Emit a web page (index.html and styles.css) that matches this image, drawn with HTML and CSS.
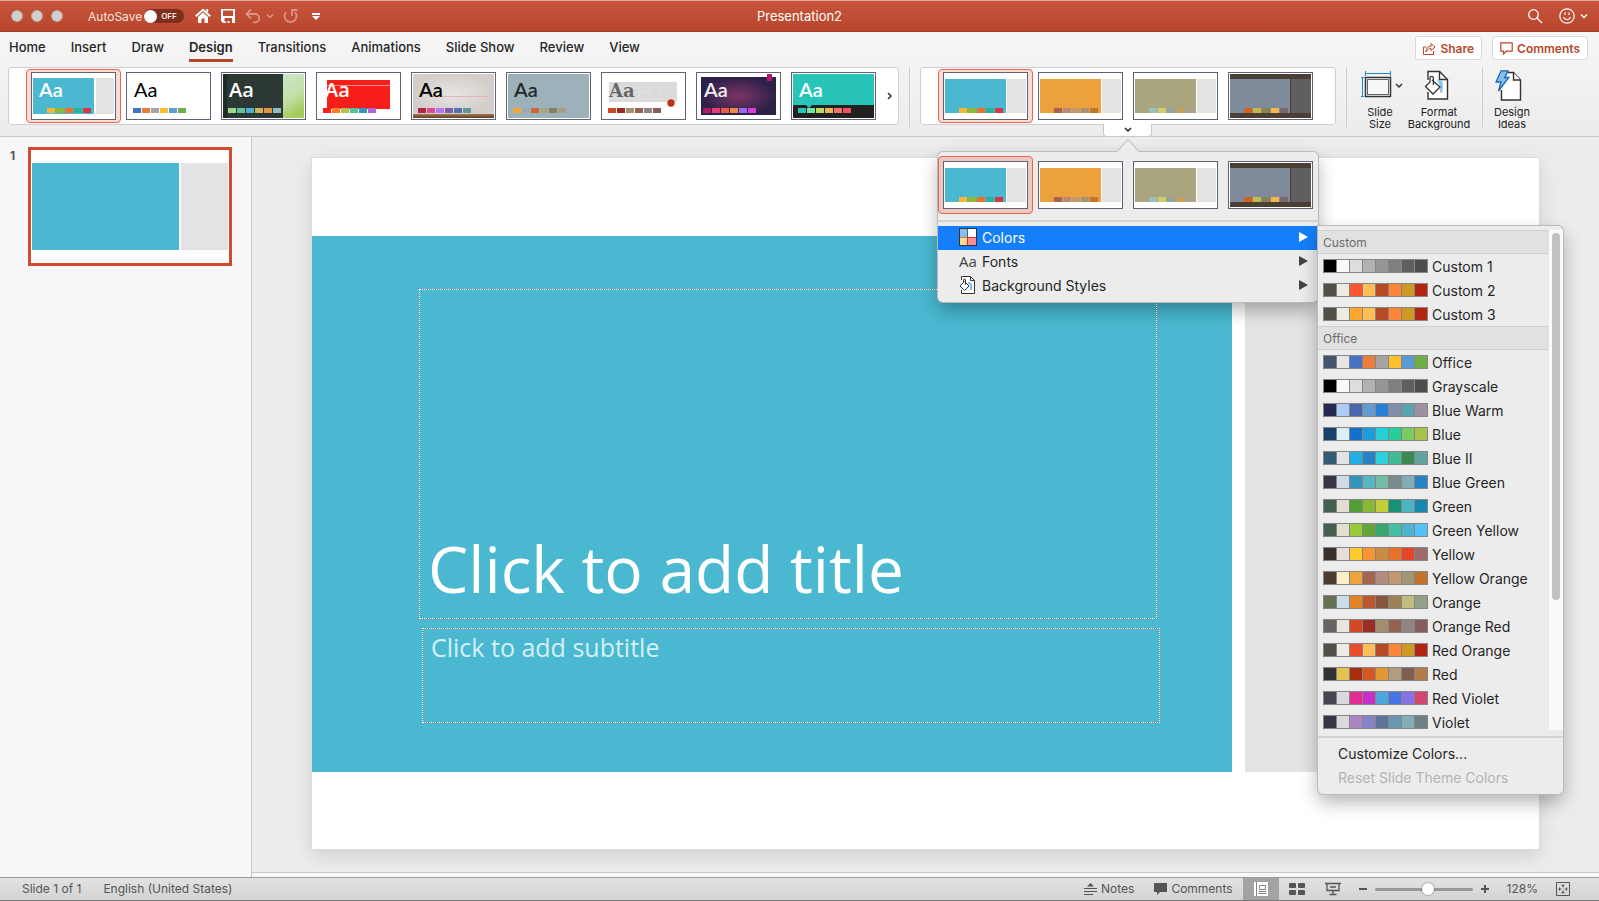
FILE: index.html
```
<!DOCTYPE html>
<html lang="en">
<head>
<meta charset="utf-8">
<title>Presentation2</title>
<link rel="stylesheet" href="styles.css">
</head>
<body>
<svg class="defs" aria-hidden="true">
  <defs>
    <radialGradient id="g-purple"><stop offset="0" stop-color="#7d3566"/><stop offset="1" stop-color="#2c2148"/></radialGradient>
    <radialGradient id="g-stone"><stop offset="0" stop-color="#e8e5e2"/><stop offset="1" stop-color="#d3cec9"/></radialGradient>
    <linearGradient id="g-leaf" x1="0" y1="0" x2="0.3" y2="1"><stop offset="0" stop-color="#c9e6c9"/><stop offset="0.6" stop-color="#c3e0a8"/><stop offset="1" stop-color="#a3cb5c"/></linearGradient>
    <linearGradient id="g-wood" x1="0" y1="0" x2="0" y2="1"><stop offset="0" stop-color="#a27a50"/><stop offset="1" stop-color="#5e3f22"/></linearGradient>
  </defs>
  <symbol id="v-teal" viewBox="0 0 85 48">
    <rect x=".5" y=".5" width="84" height="47" fill="#fff" stroke="#5f6473"/>
    <path fill="#49b8d0" d="M2 7h61v34H2z"/><path fill="#e3e3e3" d="M64 7h19v34H64z"/>
    <path fill="#fbb829" d="M16 36h8v5h-8z"/><path fill="#8fb934" d="M25 36h8v5h-8z"/><path fill="#f07024" d="M34 36h8v5h-8z"/><path fill="#29b19b" d="M43 36h8v5h-8z"/><path fill="#d6373f" d="M52 36h8v5h-8z"/>
  </symbol>
  <symbol id="v-orange" viewBox="0 0 85 48">
    <rect x=".5" y=".5" width="84" height="47" fill="#fff" stroke="#5f6473"/>
    <path fill="#eca13c" d="M2 7h61v34H2z"/><path fill="#e3e3e3" d="M64 7h19v34H64z"/>
    <path fill="#a5644e" d="M16 36h8v5h-8z"/><path fill="#b58b80" d="M25 36h8v5h-8z"/><path fill="#c3986d" d="M34 36h8v5h-8z"/><path fill="#a19574" d="M43 36h8v5h-8z"/><path fill="#c17529" d="M52 36h8v5h-8z"/>
  </symbol>
  <symbol id="v-olive" viewBox="0 0 85 48">
    <rect x=".5" y=".5" width="84" height="47" fill="#fff" stroke="#5f6473"/>
    <path fill="#a9a57f" d="M2 7h61v34H2z"/><path fill="#e3e3e3" d="M64 7h19v34H64z"/>
    <path fill="#9cbebd" d="M16 36h8v5h-8z"/><path fill="#d2cb6c" d="M25 36h8v5h-8z"/><path fill="#95a39d" d="M34 36h8v5h-8z"/><path fill="#c89f5d" d="M43 36h8v5h-8z"/><path fill="#b1a089" d="M52 36h8v5h-8z"/>
  </symbol>
  <symbol id="v-slate" viewBox="0 0 85 48">
    <rect x=".5" y=".5" width="84" height="47" fill="#fff" stroke="#5f6473"/>
    <path fill="#4b3e35" d="M2 2h81v44H2z"/><path fill="#7f8a9b" d="M2 7h60v34H2z"/><path fill="#605e61" d="M63 7h20v34H63z"/>
    <path fill="#7c8ba0" d="M7 36h8v5H7z"/><path fill="#d2631a" d="M16 36h8v5h-8z"/><path fill="#c5b947" d="M25 36h8v5h-8z"/><path fill="#8b8354" d="M34 36h8v5h-8z"/><path fill="#f8b74d" d="M43 36h8v5h-8z"/><path fill="#79696f" d="M52 36h8v5h-8z"/>
  </symbol>
</svg>

<header class="titlebar">
  <div class="titlebar-side">
    <div class="lights"><button aria-label="Close"></button><button aria-label="Minimize"></button><button aria-label="Zoom"></button></div>
    <label class="autosave">AutoSave <span class="switch"><input type="checkbox"><span class="knob"></span><span class="off">OFF</span></span></label>
    <div class="quick">
      <button aria-label="Home"><svg width="16" height="16" viewBox="0 0 16 16"><path fill="none" stroke="#fff" stroke-width="2" d="M.8 8.200 8 1.800l7.200 6.400M12.200 1v3"/><path fill="#fff" d="M3 9 8 4.600 13 9v6H9.500v-4.500h-3V15H3z"/></svg></button>
      <button aria-label="Save"><svg width="16" height="16" viewBox="0 0 16 16"><path fill="#fff" fill-rule="evenodd" d="M1 1h14v14H3l-2-2zM3 2.500V8h10V2.500zM4.500 10v3.500H6V15h1.500v-2h2v2H12v-5z"/></svg></button>
      <span class="undo"><button aria-label="Undo"><svg width="16" height="16" viewBox="0 0 16 16"><path fill="none" stroke="#dd9484" stroke-width="1.800" d="M6 1.500 1.500 6 6 10.500M1.500 6h8.500a4.200 4.200 0 0 1 0 8.400H8"/></svg></button>
      <button aria-label="Undo list"><svg width="8" height="16" viewBox="0 0 8 16"><path fill="none" stroke="#dd9484" stroke-width="1.500" d="M1 6.500l3 3 3-3"/></svg></button></span>
      <button aria-label="Redo"><svg width="16" height="16" viewBox="0 0 16 16"><path fill="none" stroke="#dd9484" stroke-width="1.800" d="M3 4A6 6 0 1 0 12 4M9 8V2h5.500"/></svg></button>
      <button aria-label="Customize toolbar"><svg width="8" height="16" viewBox="0 0 8 16"><path fill="#fff" d="M0 5h8v2H0zM0 8h8l-4 4z"/></svg></button>
    </div>
  </div>
  <h1 class="doc-name">Presentation2</h1>
  <div class="titlebar-side titlebar-end">
    <button aria-label="Search"><svg width="16" height="16" viewBox="0 0 16 16"><g fill="none" stroke="#fff" stroke-width="1.300"><circle cx="6.500" cy="6.500" r="4.800"/><path d="M10 10l5 5"/></g></svg></button>
    <button class="smile" aria-label="Feedback"><svg width="16" height="16" viewBox="0 0 16 16"><g fill="none" stroke="#fff" stroke-width="1.200"><circle cx="8" cy="8" r="7.200"/><path d="M4.500 9c.6 3.400 6.400 3.400 7 0M6 4.500v2.500M10 4.500v2.500"/></g></svg><svg width="8" height="16" viewBox="0 0 8 16"><path fill="none" stroke="#fff" stroke-width="1.500" d="M1 6.500l3 3 3-3"/></svg></button>
  </div>
</header>

<div class="ribbon">
  <nav class="tabs">
    <button>Home</button><button>Insert</button><button>Draw</button><button class="active">Design</button><button>Transitions</button><button>Animations</button><button>Slide Show</button><button>Review</button><button>View</button>
    <div class="tab-actions">
      <button class="pill"><svg width="13" height="13" viewBox="0 0 13 13"><path fill="none" stroke="#c0452b" d="M3.500 5H.5v7.500h10V9M3 10c0-4 2-5.500 5-5.500v-3L12 5 8 8.500v-2C6 6.500 4.500 7 3 10z"/></svg>Share</button>
      <button class="pill"><svg width="13" height="13" viewBox="0 0 13 13"><path fill="none" stroke="#c0452b" stroke-width="1.200" d="M.8.800h11.400v8.400H6.500L3.500 12V9.200H.8z"/></svg>Comments</button>
    </div>
  </nav>

  <div class="tools">
    <div class="gallery themes">
      <button class="thumb selected" aria-label="Theme 1"><svg width="85" height="48" viewBox="0 0 85 48"><rect x=".5" y=".5" width="84" height="47" fill="#fff" stroke="#5f6473"/><path fill="#49b8d0" d="M2 6h61v36H2z"/><path fill="#e3e3e3" d="M65 6h18v36H65z"/><text class="aa lato b" x="8" y="25" fill="#fff">Aa</text><path fill="#fbb829" d="M16 36h8v5h-8z"/><path fill="#8fb934" d="M25 36h8v5h-8z"/><path fill="#f07024" d="M34 36h8v5h-8z"/><path fill="#29b19b" d="M43 36h8v5h-8z"/><path fill="#d6373f" d="M52 36h8v5h-8z"/></svg></button>
      <button class="thumb" aria-label="Theme 2"><svg width="85" height="48" viewBox="0 0 85 48"><rect x=".5" y=".5" width="84" height="47" fill="#fff" stroke="#5f6473"/><text class="aa lato" x="8" y="25">Aa</text><path fill="#4672c4" d="M7 36h8v5H7z"/><path fill="#e97c3a" d="M16 36h8v5h-8z"/><path fill="#a4a4a4" d="M25 36h8v5h-8z"/><path fill="#fdbf2d" d="M34 36h8v5h-8z"/><path fill="#5f9bd3" d="M43 36h8v5h-8z"/><path fill="#70ac4a" d="M52 36h8v5h-8z"/></svg></button>
      <button class="thumb" aria-label="Theme 3"><svg width="85" height="48" viewBox="0 0 85 48"><rect x=".5" y=".5" width="84" height="47" fill="#fff" stroke="#5f6473"/><path fill="#2b3833" d="M2 2h60v44H2z"/><path fill="#1f2b27" d="M2 2h4v44H2z"/><path fill="url(#g-leaf)" d="M62 2h21v44H62z"/><text class="aa sans b" x="8" y="25" fill="#fff">Aa</text><path fill="#a3d58c" d="M7 36h8v5H7z"/><path fill="#62c397" d="M16 36h8v5h-8z"/><path fill="#50aed2" d="M25 36h8v5h-8z"/><path fill="#d0b45c" d="M34 36h8v5h-8z"/><path fill="#e3953c" d="M43 36h8v5h-8z"/><path fill="#8abebf" d="M52 36h8v5h-8z"/></svg></button>
      <button class="thumb" aria-label="Theme 4"><svg width="85" height="48" viewBox="0 0 85 48"><rect x=".5" y=".5" width="84" height="47" fill="#fff" stroke="#5f6473"/><path fill="#f71e1a" d="M11 8h63v29H11z"/><path stroke="#fb8f8c" d="M11 13.500h63"/><text class="aa sans b" x="9" y="25" fill="#fff">Aa</text><path fill="#fb1b19" d="M7 36h8v5H7z"/><path fill="#fd7d2d" d="M16 36h8v5h-8z"/><path fill="#b1c054" d="M25 36h8v5h-8z"/><path fill="#55c49b" d="M34 36h8v5h-8z"/><path fill="#3b95c4" d="M43 36h8v5h-8z"/><path fill="#b165d6" d="M52 36h8v5h-8z"/></svg></button>
      <button class="thumb" aria-label="Theme 5"><svg width="85" height="48" viewBox="0 0 85 48"><rect x=".5" y=".5" width="84" height="47" fill="#fff" stroke="#5f6473"/><path fill="url(#g-stone)" d="M2 2h81v40H2z"/><path fill="url(#g-wood)" d="M2 42h81v4H2z"/><path stroke="#e8b3bd" d="M22 24.500h55"/><text class="aa lato b" x="8" y="25">Aa</text><path fill="#b52444" d="M7 36h8v5H7z"/><path fill="#dd4b91" d="M16 36h8v5h-8z"/><path fill="#b877ee" d="M25 36h8v5h-8z"/><path fill="#7c60b0" d="M34 36h8v5h-8z"/><path fill="#5b6fae" d="M43 36h8v5h-8z"/><path fill="#65949f" d="M52 36h8v5h-8z"/></svg></button>
      <button class="thumb" aria-label="Theme 6"><svg width="85" height="48" viewBox="0 0 85 48"><rect x=".5" y=".5" width="84" height="47" fill="#fff" stroke="#5f6473"/><path fill="#9db1ba" d="M2 2h81v44H2z"/><text class="aa lato b" x="8" y="25" fill="#262a2c">Aa</text><path fill="#f9a533" d="M7 36h8v5H7z"/><path fill="#98a9af" d="M16 36h8v5h-8z"/><path fill="#d0653a" d="M25 36h8v5h-8z"/><path fill="#a1aa81" d="M34 36h8v5h-8z"/><path fill="#857d5c" d="M43 36h8v5h-8z"/><path fill="#a79e8a" d="M52 36h8v5h-8z"/></svg></button>
      <button class="thumb" aria-label="Theme 7"><svg width="85" height="48" viewBox="0 0 85 48"><rect x=".5" y=".5" width="84" height="47" fill="#fff" stroke="#5f6473"/><path fill="#dadada" d="M8 10h68v20H8z"/><path stroke="#e0e0e0" d="M8 14.500h68M8 20.500h68M8 26.500h68M38.500 10v20M48.500 10v20M58.500 10v20M68.500 10v20"/><circle cx="70" cy="31" r="3.700" fill="#b93416"/><text class="aa slab" x="8" y="25" fill="#666">Aa</text><path fill="#d24822" d="M7 36h8v5H7z"/><path fill="#972b24" d="M16 36h8v5h-8z"/><path fill="#a2916a" d="M25 36h8v5h-8z"/><path fill="#986253" d="M34 36h8v5h-8z"/><path fill="#918485" d="M43 36h8v5h-8z"/><path fill="#875c5d" d="M52 36h8v5h-8z"/></svg></button>
      <button class="thumb" aria-label="Theme 8"><svg width="85" height="48" viewBox="0 0 85 48"><rect x=".5" y=".5" width="84" height="47" fill="#fff" stroke="#5f6473"/><path fill="url(#g-purple)" d="M5 5h75v38H5z"/><path fill="#b01765" d="M71 2h5v7h-5z"/><text class="aa lato b" x="8" y="25" fill="#eee">Aa</text><path fill="#b01765" d="M7 36h8v5H7z"/><path fill="#e63c73" d="M16 36h8v5h-8z"/><path fill="#e75c43" d="M25 36h8v5h-8z"/><path fill="#e98e40" d="M34 36h8v5h-8z"/><path fill="#9c6bf2" d="M43 36h8v5h-8z"/><path fill="#d63ed6" d="M52 36h8v5h-8z"/></svg></button>
      <button class="thumb" aria-label="Theme 9"><svg width="85" height="48" viewBox="0 0 85 48"><rect x=".5" y=".5" width="84" height="47" fill="#fff" stroke="#5f6473"/><path fill="#212121" d="M2 33h81v13H2z"/><path fill="#28c3b9" d="M2 2h81v31H21l-3 3-3-3H2z"/><text class="aa lato b" x="8" y="25" fill="#fff">Aa</text><path fill="#28c3b9" d="M7 36h8v5H7z"/><path fill="#74e6a0" d="M16 36h8v5h-8z"/><path fill="#b6dc64" d="M25 36h8v5h-8z"/><path fill="#f1b25a" d="M34 36h8v5h-8z"/><path fill="#f17760" d="M43 36h8v5h-8z"/><path fill="#f15060" d="M52 36h8v5h-8z"/></svg></button>
      <button class="more" aria-label="More themes"><svg width="6" height="8" viewBox="0 0 6 8"><path fill="none" stroke="#333" stroke-width="1.500" d="M1 1l3 3-3 3"/></svg></button>
    </div>
    <div class="rule"></div>
    <div class="variant-group">
      <div class="gallery">
        <button class="thumb selected" aria-label="Variant 1"><svg width="85" height="48"><use href="#v-teal"/></svg></button>
        <button class="thumb" aria-label="Variant 2"><svg width="85" height="48"><use href="#v-orange"/></svg></button>
        <button class="thumb" aria-label="Variant 3"><svg width="85" height="48"><use href="#v-olive"/></svg></button>
        <button class="thumb" aria-label="Variant 4"><svg width="85" height="48"><use href="#v-slate"/></svg></button>
      </div>
      <button class="drop" aria-label="More variants"><svg width="8" height="6" viewBox="0 0 8 6"><path fill="none" stroke="#222" stroke-width="1.500" d="M1 1l3 3 3-3"/></svg></button>

      <div class="popover">
        <svg class="beak" width="26" height="14" viewBox="0 0 26 14"><path fill="#ececec" stroke="#b5b5b5" d="M0 13C5 12.500 10 1 13 1S21 12.500 26 13"/><path fill="#ececec" d="M0 13.500h26v.5H0z"/></svg>
        <div class="pop-thumbs">
          <button class="thumb selected" aria-label="Variant 1"><svg width="85" height="48"><use href="#v-teal"/></svg></button>
          <button class="thumb" aria-label="Variant 2"><svg width="85" height="48"><use href="#v-orange"/></svg></button>
          <button class="thumb" aria-label="Variant 3"><svg width="85" height="48"><use href="#v-olive"/></svg></button>
          <button class="thumb" aria-label="Variant 4"><svg width="85" height="48"><use href="#v-slate"/></svg></button>
        </div>
        <hr>
        <button class="item current"><svg width="18" height="18" viewBox="0 0 18 18"><path fill="#88bdea" d="M0 0h9v9H0z"/><path fill="#fff" d="M9 0h9v9H9z"/><path fill="#f8d98f" d="M0 9h9v9H0z"/><path fill="#fb8e96" d="M9 9h9v9H9z"/><path stroke="#d9772b" d="M0 9.500h9"/><path stroke="#d02c35" d="M8.500 9v9M9 9.500h9"/><path stroke="#2463a8" d="M8.500 0v9"/><rect x=".5" y=".5" width="17" height="17" fill="none" stroke="#333"/></svg><span>Colors</span><i></i></button>
        <button class="item"><span class="font-glyph" aria-hidden="true">Aa</span><span>Fonts</span><i></i></button>
        <button class="item"><svg width="18" height="18" viewBox="0 0 18 18"><path fill="#fff" stroke="#333" d="M2.500 4V.5h9l4 4v13h-13V14"/><path fill="none" stroke="#333" d="M11.500.5v4h4"/><path fill="none" stroke="#7db8e8" stroke-width="2" d="M9 7c3 0 3.500 2 3 7"/><path fill="#fff" stroke="#333" d="M5.500 5.500 10 10l-4.500 4.500L1 10l3.500-3.500V4a1 1 0 0 1 2 0v4.500"/></svg><span>Background Styles</span><i></i></button>

        <div class="submenu">
          <div class="scroll-area">
            <div class="palettes">
              <h2>Custom</h2>
              <button data-colors="000000 f8f8f8 dddddd b2b2b2 969696 808080 5f5f5f 4d4d4d">Custom 1</button>
              <button data-colors="505046 eeece1 ff5530 ffbd55 b64926 ff8436 cc9923 b02410">Custom 2</button>
              <button data-colors="505046 eeece1 ffa62f ffbd55 b64926 ff8436 cc9923 b02410">Custom 3</button>
              <h2>Office</h2>
              <button data-colors="44546a e7e6e6 4672c4 ed7d3a a5a5a5 ffc02d 5b9bd5 70ad47">Office</button>
              <button data-colors="000000 f8f8f8 dddddd b2b2b2 969696 808080 5f5f5f 4d4d4d">Grayscale</button>
              <button data-colors="242852 accbf9 4a66ac 629dd1 297fd5 7f8fa9 5aa2ae 9d90a0">Blue Warm</button>
              <button data-colors="17406d dbeff9 176fc7 1b9dd9 26d0d9 25ce9b 7cca62 a5c249">Blue</button>
              <button data-colors="335b74 dfe3e5 24ade4 2683c6 31cfd7 42ba97 3e8853 62a39f">Blue II</button>
              <button data-colors="373545 cedbe6 3494ba 58b6c0 75bda7 7a8c8e 84acb6 2683c6">Blue Green</button>
              <button data-colors="455f51 e3ded1 549e39 8ab833 c0cf3a 149474 4ab5c4 1689b1">Green</button>
              <button data-colors="455f51 e2dfcc 99cb38 63a537 37a76f 44c1a3 4eb3cf 51c3f9">Green Yellow</button>
              <button data-colors="39302a e5dedb ffca2b f89432 cb8b43 eb7027 e44529 9c6a6a">Yellow</button>
              <button data-colors="4e3b30 fbeec9 f0a23b a5644e b58b80 c3986d a19574 c17529">Yellow Orange</button>
              <button data-colors="637052 ccddea e48326 bd582c 865640 9b8357 c2bc80 94a088">Orange</button>
              <button data-colors="696464 e9e5dc d34822 9b2d26 a28e6a 956251 918485 855d5d">Orange Red</button>
              <button data-colors="505046 eeece1 e84c2b ffbd55 b64926 ff8436 cc9923 b02410">Red Orange</button>
              <button data-colors="323232 e5c250 a5300f d55820 e19832 b19c7d 7f5f52 b27d49">Red</button>
              <button data-colors="454551 d8d9dc e32d91 c830cc 4ea6dc 4775e7 8971e1 d54773">Red Violet</button>
              <button data-colors="373545 dcd8dc ad84c6 8484c7 5d739a 6997af 84acb6 6f8183">Violet</button>
            </div>
            <div class="track"><div class="grip"></div></div>
          </div>
          <hr>
          <button class="foot">Customize Colors...</button>
          <button class="foot" disabled>Reset Slide Theme Colors</button>
        </div>
      </div>
    </div>
    <div class="rule"></div>
    <button class="tool size"><span class="tool-icon"><svg width="31" height="30" viewBox="0 0 31 30"><path fill="none" stroke="#1e88d2" d="M4.500 3.500h25M4.500 1v5M29.500 1v5M1.500 7.500v19M0 7.500h3M0 26.500h3"/><rect x="4.500" y="7.500" width="25" height="19" fill="#fff" stroke="#333" stroke-width="1.500"/><rect x="6.500" y="9.500" width="21" height="15" fill="#f8f8f8" stroke="#666"/></svg><svg class="chev" width="8" height="6" viewBox="0 0 8 6"><path fill="none" stroke="#333" stroke-width="1.500" d="M1 1l3 3 3-3"/></svg></span>Slide<br>Size</button>
    <button class="tool wide"><span class="tool-icon"><svg width="26" height="30" viewBox="0 0 26 30"><path fill="#fff" stroke="#333" stroke-width="1.400" d="M4 10V1.500h11.500l8 8V29H4v-7"/><path fill="none" stroke="#333" stroke-width="1.400" d="M15.500 1.500v8h8"/><path fill="#8cc4f0" d="M13 10c6-1 7 4 5 13-1 0-3-1-2-5 0-3-1-5-3-8z"/><path fill="#fff" stroke="#333" stroke-width="1.300" d="M8 10l8 7-7 7-7.500-7.500L6 12V8a1.700 1.700 0 0 1 3.400 0v7"/></svg></span>Format<br>Background</button>
    <div class="rule"></div>
    <button class="tool ideas"><span class="tool-icon"><svg width="28" height="31" viewBox="0 0 28 31"><path fill="#fff" stroke="#333" stroke-width="1.400" d="M6.500 20v10h19V10l-7-7.500H13"/><path fill="#fff" stroke="#333" stroke-width="1.400" d="M18.500 2.500V10h7"/><path fill="#83beed" stroke="#1769b5" stroke-width="1.300" d="M6 .8h7L9.800 7.500h4L3.500 21 6 12H1z"/></svg></span>Design<br>Ideas</button>
  </div>
</div>

<main class="work">
  <aside class="slides">
    <span class="num">1</span>
    <button class="mini" aria-label="Slide 1"><span class="mini-main"></span><span class="mini-side"></span></button>
  </aside>
  <section class="stage">
    <div class="slide">
      <div class="slide-main">
        <div class="ph ph-title">Click to add title</div>
        <div class="ph ph-sub">Click to add subtitle</div>
      </div>
      <div class="slide-side"></div>
    </div>
    <div class="notes-strip"></div>
  </section>
</main>

<footer class="status">
  <span>Slide 1 of 1</span>
  <button class="lang">English (United States)</button>
  <div class="status-end">
    <button class="notes"><svg width="13" height="14" viewBox="0 0 13 14"><path stroke="#555" d="M0 6.500h13M0 9.500h13M0 12.500h9"/><path fill="#555" d="M3 4.500 6.500 1 10 4.500z"/></svg>Notes</button>
    <button class="comm"><svg width="13" height="12" viewBox="0 0 13 12"><path fill="#555" d="M0 0h13v9H6l-3 3V9H0z"/></svg>Comments</button>
    <button class="view on" aria-label="Normal view"><svg width="14" height="14" viewBox="0 0 14 14"><path fill="#fff" d="M0 0h14v14H0z"/><path fill="none" stroke="#858585" d="M2.500 0v14M5.500 3.500h6v4h-6zM4.500 9.500h8M4.500 11.500h8"/></svg></button>
    <button class="view" aria-label="Slide sorter"><svg width="16" height="12" viewBox="0 0 16 12"><g fill="#555"><rect width="7" height="5" rx="1"/><rect x="9" width="7" height="5" rx="1"/><rect y="7" width="7" height="5" rx="1"/><rect x="9" y="7" width="7" height="5" rx="1"/></g></svg></button>
    <button class="view" aria-label="Slide show"><svg width="16" height="14" viewBox="0 0 16 14"><path fill="none" stroke="#555" stroke-width="1.300" d="M0 1.500h16M2 1.500v7h12v-7M8 8.500V12M4.500 12.500h7M5 5h6"/></svg></button>
    <button class="zoom-btn" aria-label="Zoom out"><svg width="8" height="8" viewBox="0 0 8 8"><path stroke="#555" stroke-width="2" d="M0 4h8"/></svg></button>
    <input type="range" aria-label="Zoom" min="0" max="100" value="55">
    <button class="zoom-btn" aria-label="Zoom in"><svg width="8" height="8" viewBox="0 0 8 8"><path stroke="#555" stroke-width="2" d="M0 4h8M4 0v8"/></svg></button>
    <span class="pct">128%</span>
    <button aria-label="Fit slide to window"><svg width="14" height="14" viewBox="0 0 14 14"><path fill="none" stroke="#555" d="M.5.500h13v13H.5z"/><path fill="none" stroke="#555" d="M7 2.500v3M7 8.500v3M2.500 7h3M8.500 7h3M5.500 3.500h3M5.500 10.500h3M3.500 5.500v3M10.500 5.500v3"/></svg></button>
  </div>
</footer>
<script src="palettes.js"></script>
</body>
</html>
```
FILE: palettes.js
```
// Puts the row of colour cells in front of each palette name.
document.querySelectorAll('[data-colors]').forEach(function (row) {
  var strip = document.createElement('span');
  strip.className = 'strip';
  row.dataset.colors.split(' ').forEach(function (hex) {
    var cell = document.createElement('span');
    cell.style.background = '#' + hex;
    strip.appendChild(cell);
  });
  row.prepend(strip);
});
```
FILE: styles.css
```
* { box-sizing: border-box; }
html, body { height: 100%; }
body {
  margin: 0;
  display: flex;
  flex-direction: column;
  overflow: hidden;
  background: #ececec;
  color: #262626;
  font-family: Inter, "Liberation Sans", sans-serif;
  font-size: 13px;
}
button {
  margin: 0;
  padding: 0;
  border: 0;
  background: none;
  color: inherit;
  font: inherit;
}
svg { display: block; flex: none; }
.defs { position: absolute; width: 0; height: 0; }
h1, h2 { margin: 0; }

.titlebar {
  display: grid;
  grid-template-columns: 1fr auto 1fr;
  align-items: center;
  height: 32px;
  flex: none;
  border-top: 1px solid #e2a79b;
  border-bottom: 1px solid #a23c22;
  background: linear-gradient(#c7543b, #b7472c);
  color: #fff;
}
.titlebar-side { display: flex; align-items: center; }
.titlebar-end { justify-content: flex-end; gap: 16px; padding-right: 11px; }
.lights { display: flex; gap: 8px; padding-left: 11px; }
.lights button {
  width: 12px;
  height: 12px;
  border: 1px solid #b9a29c;
  border-radius: 50%;
  background: #d0d0d0;
}
.autosave {
  display: flex;
  align-items: center;
  gap: 2px;
  margin-left: 25px;
  font-size: 12px;
  color: #fbe4df;
}
.switch {
  display: flex;
  align-items: center;
  gap: 4px;
  width: 40px;
  height: 14px;
  border-radius: 7px;
  background: #7d2f1e;
  font-size: 8px;
  font-weight: 600;
}
.switch input { appearance: none; width: 0; height: 0; margin: 0 -4px 0 0; }
.knob { width: 13px; height: 13px; border-radius: 50%; background: #fff; }
.quick { display: flex; align-items: center; gap: 9px; margin-left: 11px; }
.undo { display: flex; gap: 5px; }
.quick > :last-child { margin-left: 4px; }
.doc-name { font-size: 13px; font-weight: 400; }
.smile { display: flex; gap: 5px; }

.ribbon {
  flex: none;
  border-bottom: 1px solid #c8c8c8;
  background: linear-gradient(#f6f6f6, #ececec);
}
.tabs {
  display: flex;
  align-items: center;
  gap: 25px;
  height: 32px;
  padding: 0 11px 0 9px;
  font-weight: 500;
}
.tabs > button { height: 28px; line-height: 24px; border-bottom: 3px solid transparent; }
.tabs .active { border-color: #b7472a; font-weight: 600; }
.tab-actions { display: flex; gap: 10px; margin-left: auto; }
.pill {
  display: flex;
  align-items: center;
  gap: 4px;
  height: 24px;
  padding: 0 7px;
  border: 1px solid #d9d9d9;
  border-radius: 3px;
  background: #fff;
  color: #b7472a;
  font-size: 12px;
  font-weight: 600;
}
.tools { display: flex; align-items: flex-start; padding: 3px 0 6px 8px; }
.gallery {
  display: flex;
  padding: 1px 17px;
  border: 1px solid #cfcfcf;
  border-radius: 3px;
  background: #fff;
}
.themes { flex: 1; min-width: 0; padding-right: 0; overflow: hidden; }
.thumb {
  flex: none;
  width: 95px;
  padding: 2px 4px;
  border: 1px solid transparent;
  border-radius: 4px;
}
.thumb.selected { border-color: #e8644a; background: #fadbd5; }
.aa { font-size: 20px; }
.lato { font-family: Lato, sans-serif; }
.sans { font-family: "Open Sans", sans-serif; }
.slab { font-family: "DejaVu Serif", serif; font-weight: 700; font-size: 18px; }
.b { font-weight: 600; }
.more { flex: 1; display: flex; align-items: center; justify-content: center; }
.rule { flex: none; width: 1px; height: 62px; margin: 0 10px; background: #cfcfcf; }
.variant-group { position: relative; flex: none; width: 416px; }
.drop {
  position: absolute;
  top: 57px;
  left: 183px;
  width: 49px;
  height: 13px;
  display: flex;
  align-items: center;
  justify-content: center;
  border: 1px solid #c9c9c9;
  border-top: 0;
  border-radius: 0 0 4px 4px;
  background: #fff;
}
.tool { width: 52px; font-size: 11px; line-height: 12px; text-align: center; color: #222; }
.tool-icon { position: relative; display: flex; justify-content: center; height: 39px; padding-top: 3px; }
.tool.size { margin-left: -3px; }
.size .tool-icon { margin-right: 8px; }
.chev { position: absolute; top: 16px; right: -5px; }
.tool.wide { width: 66px; }
.wide .tool-icon { padding-right: 4px; }
.tool.wide + .rule { margin: 0 3px 0 10px; }
.tool.ideas { margin-right: 61px; }
.ideas .tool-icon { padding-right: 6px; }

.popover {
  position: absolute;
  z-index: 2;
  top: 85px;
  left: 18px;
  width: 380px;
  padding: 4px 0;
  border-radius: 5px;
  background: #ececec;
  box-shadow: 0 0 0 1px #bbb, 0 8px 18px rgba(0, 0, 0, .3);
  font-size: 14px;
}
.beak { position: absolute; top: -13px; left: 177px; }
.pop-thumbs { display: flex; }
.pop-thumbs .thumb { padding: 4px; }
.pop-thumbs .selected { background: #eccac4; }
.popover hr { height: 2px; margin: 6px 0 4px; border: 0; background: #d2d2d4; }
.item { display: flex; align-items: center; width: 100%; height: 24px; gap: 5px; padding: 0 10px 2px 21px; }
.item.current { background: #147efb; color: #fff; }
.item i {
  margin-left: auto;
  border: 5px solid transparent;
  border-left: 9px solid #444;
  border-right: 0;
}
.item.current i { border-left-color: #fff; }
.font-glyph { width: 18px; font-family: "Open Sans", sans-serif; font-size: 15px; line-height: 20px; color: #444; }

.submenu {
  position: absolute;
  top: 74px;
  left: 380px;
  width: 245px;
  padding: 4px 0;
  border-radius: 0 5px 5px 5px;
  background: #ececec;
  box-shadow: 0 0 0 1px #bbb, 0 8px 18px rgba(0, 0, 0, .3);
}
.scroll-area { display: flex; height: 500px; }
.palettes { flex: 1; overflow: hidden; }
.palettes h2 {
  height: 24px;
  padding-left: 5px;
  border: 1px solid #d0d0d0;
  border-width: 1px 0;
  background: #e1e1e1;
  color: #6b6b6b;
  font-size: 12px;
  font-weight: 400;
  line-height: 24px;
}
.palettes button { display: flex; align-items: center; gap: 4px; width: 100%; height: 24px; padding: 0 0 0 5px; }
.strip { display: flex; gap: 1px; padding: 1px; background: #858585; }
.strip span { width: 12px; height: 12px; }
.track { width: 14px; padding: 3px; background: #fafafa; }
.grip { width: 8px; height: 367px; border-radius: 4px; background: #c1c1c1; }
.foot { display: block; width: 100%; height: 24px; padding: 0 0 2px 20px; text-align: left; }
.foot:disabled { color: #b3b3b3; }

.work { display: flex; flex: 1; min-height: 0; }
.slides {
  display: flex;
  align-items: flex-start;
  gap: 12px;
  flex: none;
  width: 252px;
  padding: 10px 19px 0 10px;
  border-right: 1px solid #c8c8c8;
  background: #f7f7f7;
}
.num { width: 6px; font-size: 12px; font-weight: 700; line-height: 18px; color: #555; }
.mini {
  display: flex;
  gap: 2px;
  flex: 1;
  height: 119px;
  padding: 13px 1px;
  border: 3px solid #d24a30;
  background: #fff;
}
.mini-main { flex: 147; align-self: stretch; background: #49b8d0; }
.mini-side { flex: 47; align-self: stretch; background: #e3e3e3; }
.stage { display: flex; flex-direction: column; flex: 1; min-width: 0; }
.slide {
  display: grid;
  grid-template-columns: 920fr 294fr;
  gap: 13px;
  aspect-ratio: 1227 / 691;
  margin: 21px 60px 0;
  padding: 78px 0 77px;
  background: #fff;
  box-shadow: 0 0 0 1px #dcdcdc, 0 6px 18px rgba(0, 0, 0, .13);
}
.slide-main {
  display: flex;
  flex-direction: column;
  gap: 9px;
  padding: 53px 72px 49px 107px;
  background: #49b8d0;
  font-family: "Open Sans", sans-serif;
  color: #fff;
}
.slide-side { background: #e3e3e3; }
.ph {
  border: 1px dotted #fff;
  background: linear-gradient(#49b8d0, #49b8d0) padding-box, linear-gradient(#8f7f79, #8f7f79) border-box;
}
.ph-title {
  display: flex;
  align-items: flex-end;
  flex: 1;
  margin-right: 3px;
  padding: 0 8px;
  font-size: 64px;
  line-height: 98px;
}
.ph-sub { height: 95px; margin-left: 3px; padding: 0 8px; font-size: 25px; line-height: 36px; color: #d5f0f6; }
.notes-strip { height: 5px; margin-top: auto; border-top: 1px solid #c8c8c8; background: #f8f8f8; }

.status {
  display: flex;
  align-items: center;
  flex: none;
  height: 24px;
  padding: 0 29px 0 22px;
  border-top: 1px solid #9c9c9c;
  border-bottom: 1px solid #777;
  background: linear-gradient(#e2e2e2, #d3d3d3);
  color: #555;
  font-size: 12px;
  line-height: 12px;
}
.lang { margin-left: 22px; }
.status-end { display: flex; align-items: center; height: 100%; margin-left: auto; }
.status button { display: flex; align-items: center; justify-content: center; gap: 4px; }
.notes { margin-right: 20px; }
.comm { margin-right: 10px; }
.status .view { width: 36px; height: 100%; }
.status .on { background: #a3a3a3; }
.zoom-btn { margin: 0 8px; }
.status input {
  appearance: none;
  width: 98px;
  height: 3px;
  margin: 0;
  border-radius: 2px;
  background: #999;
}
.status input::-webkit-slider-thumb {
  appearance: none;
  width: 12px;
  height: 12px;
  border-radius: 50%;
  background: #fff;
  box-shadow: 0 0 1px 1px rgba(0, 0, 0, .2);
}
.pct { margin: 0 18px 0 10px; }
```
